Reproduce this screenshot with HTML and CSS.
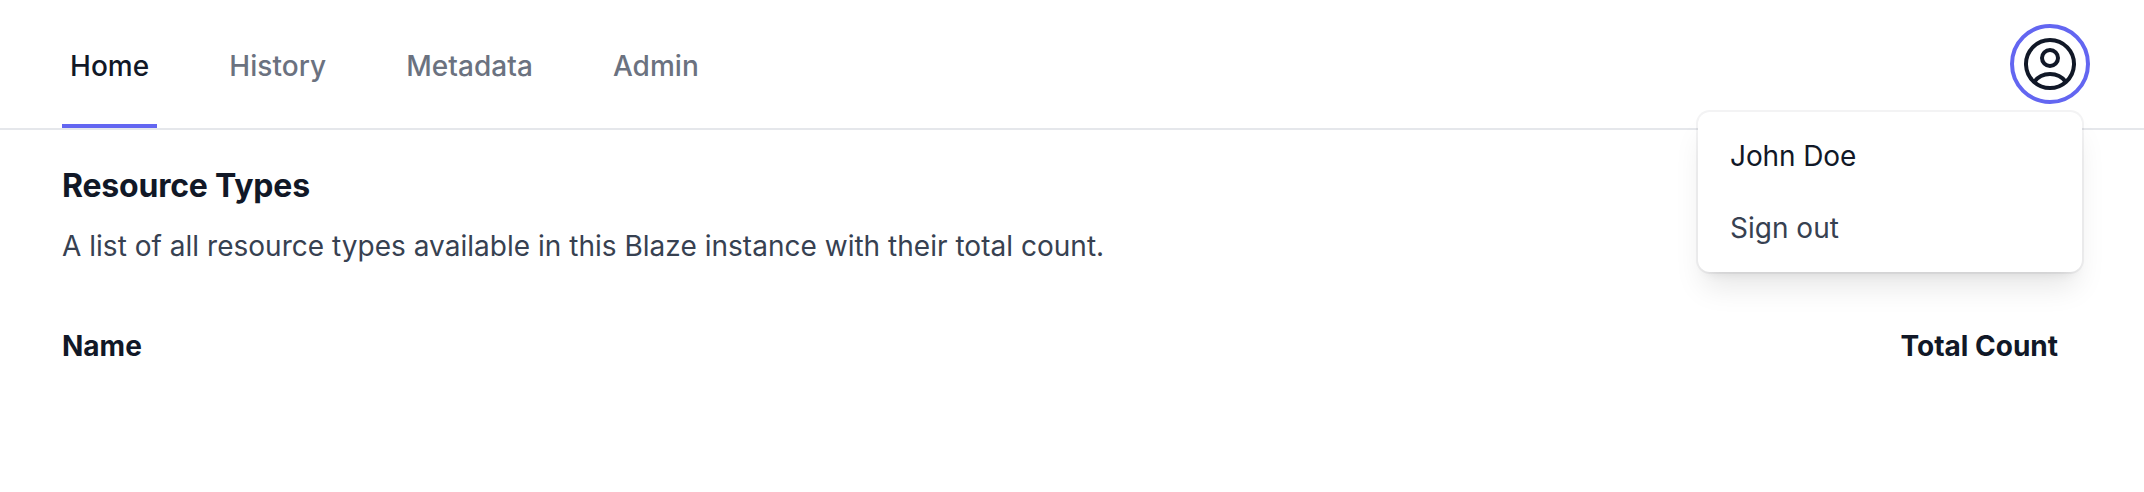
FILE: index.html
```html
<!DOCTYPE html>
<html lang="en">
<head>
<meta charset="utf-8">
<title>Blaze</title>
<link rel="stylesheet" href="styles.css">
</head>
<body>
<header class="header">
  <nav class="nav">
    <a class="nav-link active">Home</a>
    <a class="nav-link">History</a>
    <a class="nav-link">Metadata</a>
    <a class="nav-link">Admin</a>
  </nav>
  <div class="profile">
    <button class="avatar" aria-label="User menu">
      <svg class="avatar-icon" viewBox="0 0 24 24" fill="none" stroke="currentColor" stroke-width="1.5" stroke-linecap="round" stroke-linejoin="round"><path d="M17.982 18.725A7.488 7.488 0 0 0 12 15.75a7.488 7.488 0 0 0-5.982 2.975m11.963 0a9 9 0 1 0-11.963 0m11.963 0A8.966 8.966 0 0 1 12 21a8.966 8.966 0 0 1-5.982-2.275M15 9.75a3 3 0 1 1-6 0 3 3 0 0 1 6 0Z"/></svg>
    </button>
    <div class="menu">
      <p class="menu-item user">John Doe</p>
      <a class="menu-item">Sign out</a>
    </div>
  </div>
</header>
<main class="main">
  <h1 class="title">Resource Types</h1>
  <p class="description">A list of all resource types available in this Blaze instance with their total count.</p>
  <div class="table-head">
    <span>Name</span>
    <span>Total Count</span>
  </div>
</main>
</body>
</html>
```
FILE: styles.css
```css
* { box-sizing: border-box; margin: 0; padding: 0; }
body { font-family: Inter, sans-serif; font-size: 28px; line-height: 40px; color: #111827; background: #fff; height: 492px; overflow: hidden; }
.header { display: flex; justify-content: space-between; height: 130px; padding: 0 54px 0 62px; border-bottom: 2px solid #e5e7eb; }
.nav { display: flex; gap: 64px; }
.nav-link { display: flex; align-items: center; padding: 8px 8px 0; font-weight: 500; letter-spacing: 0.05px; color: #6b7280; border-bottom: 4px solid transparent; }
.nav-link.active { color: #111827; border-bottom-color: #6366f1; }
.profile { position: relative; padding-top: 24px; }
.avatar { display: flex; align-items: center; justify-content: center; width: 80px; height: 80px; border: 4px solid #6366f1; border-radius: 50%; background: #fff; color: #111827; }
.avatar-icon { width: 64px; height: 64px; flex: none; }
.menu { position: absolute; top: 112px; right: 8px; width: 384px; padding: 8px 0; background: #fff; border-radius: 12px; box-shadow: 0 0 0 2px rgba(17,24,39,.05), 0 20px 30px -6px rgba(0,0,0,.1), 0 8px 12px -8px rgba(0,0,0,.1); }
.menu-item { display: block; padding: 16px 32px; color: #374151; }
.menu-item.user { color: #111827; letter-spacing: -0.1px; }
.main { padding: 32px 86px 0 62px; }
.title { font-size: 32px; line-height: 48px; font-weight: 650; letter-spacing: -0.2px; }
.description { margin-top: 16px; letter-spacing: 0.02px; color: #374151; }
.table-head { display: flex; justify-content: space-between; margin-top: 60px; font-weight: 650; }
```
